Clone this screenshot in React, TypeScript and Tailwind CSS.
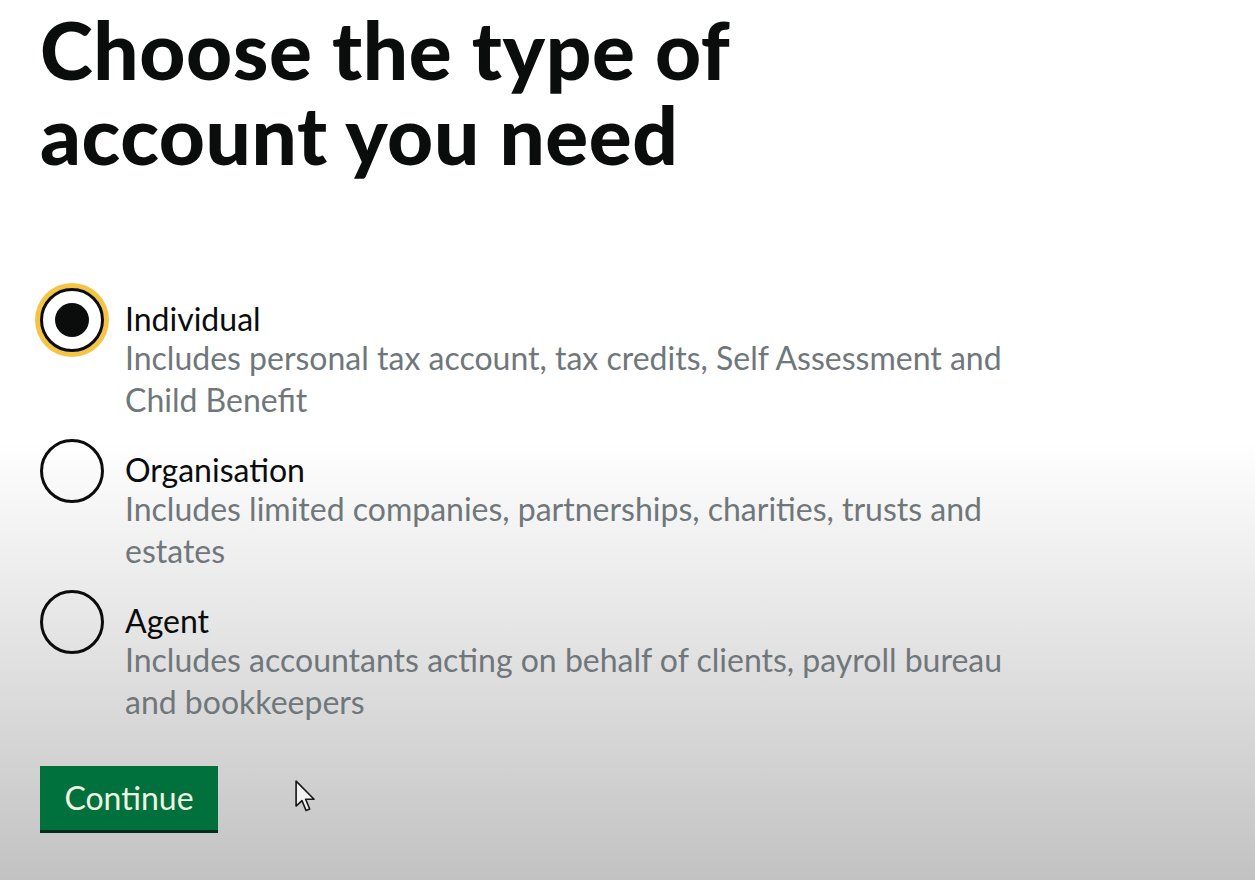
const OPTIONS = [
  {
    id: 'individual',
    label: 'Individual',
    hint: ['Includes personal tax account, tax credits, Self Assessment and', 'Child Benefit'],
    checked: true,
  },
  {
    id: 'organisation',
    label: 'Organisation',
    hint: ['Includes limited companies, partnerships, charities, trusts and', 'estates'],
    checked: false,
  },
  {
    id: 'agent',
    label: 'Agent',
    hint: ['Includes accountants acting on behalf of clients, payroll bureau', 'and bookkeepers'],
    checked: false,
  },
]

function Radio({ checked }: { checked: boolean }) {
  return (
    <span
      className={
        checked
          ? 'flex h-[64px] w-[64px] shrink-0 items-center justify-center rounded-full border-[3px] border-[#0b0c0c] bg-white shadow-[0_0_0_5px_#f6c445]'
          : 'flex h-[64px] w-[64px] shrink-0 items-center justify-center rounded-full border-[3px] border-[#0b0c0c] bg-transparent'
      }
    >
      {checked && <span className="h-[34px] w-[34px] rounded-full bg-[#0b0c0c]" />}
    </span>
  )
}

function Cursor() {
  return (
    <svg
      className="absolute left-[295px] top-[780px]"
      width="22"
      height="33"
      viewBox="0 0 12 18"
      fill="none"
    >
      <path
        d="M0.6 0.6 L0.6 14.2 L3.8 11.2 L6 16.6 L8 15.8 L5.8 10.5 L10.4 10.5 Z"
        fill="#f2f2f2"
        stroke="#1a1a1a"
        strokeWidth="0.9"
        strokeLinejoin="round"
      />
    </svg>
  )
}

export default function App() {
  return (
    <div
      className="relative h-[880px] w-full overflow-hidden bg-[linear-gradient(to_bottom,#ffffff_0%,#ffffff_50%,#c2c2c2_100%)] text-[#0b0c0c]"
      style={{ fontFamily: 'Lato, "Noto Sans", sans-serif' }}
    >
      <div className="pl-[40px] pt-[7px]">
        <h1 className="text-[80px] font-black leading-[85px] tracking-[0.6px]">
          Choose the type of
          <br />
          account you need
        </h1>

        <div className="mt-[111px] flex flex-col gap-[18px]">
          {OPTIONS.map((o) => (
            <div key={o.id} className="flex items-start gap-[21px]">
              <Radio checked={o.checked} />
              <div className="pt-[12px]">
                <div className="text-[32px] leading-[37px] text-[#0b0c0c]">{o.label}</div>
                <div className="text-[32px] leading-[42px] text-[#6f777b]">
                  {o.hint[0]}
                  <br />
                  {o.hint[1]}
                </div>
              </div>
            </div>
          ))}
        </div>

        <button className="mt-[43px] h-[67px] w-[178px] border-b-[3px] border-[#002d18] bg-[#00703c] text-[32px] text-[#eef3e2]">
          Continue
        </button>
      </div>
      <Cursor />
    </div>
  )
}
